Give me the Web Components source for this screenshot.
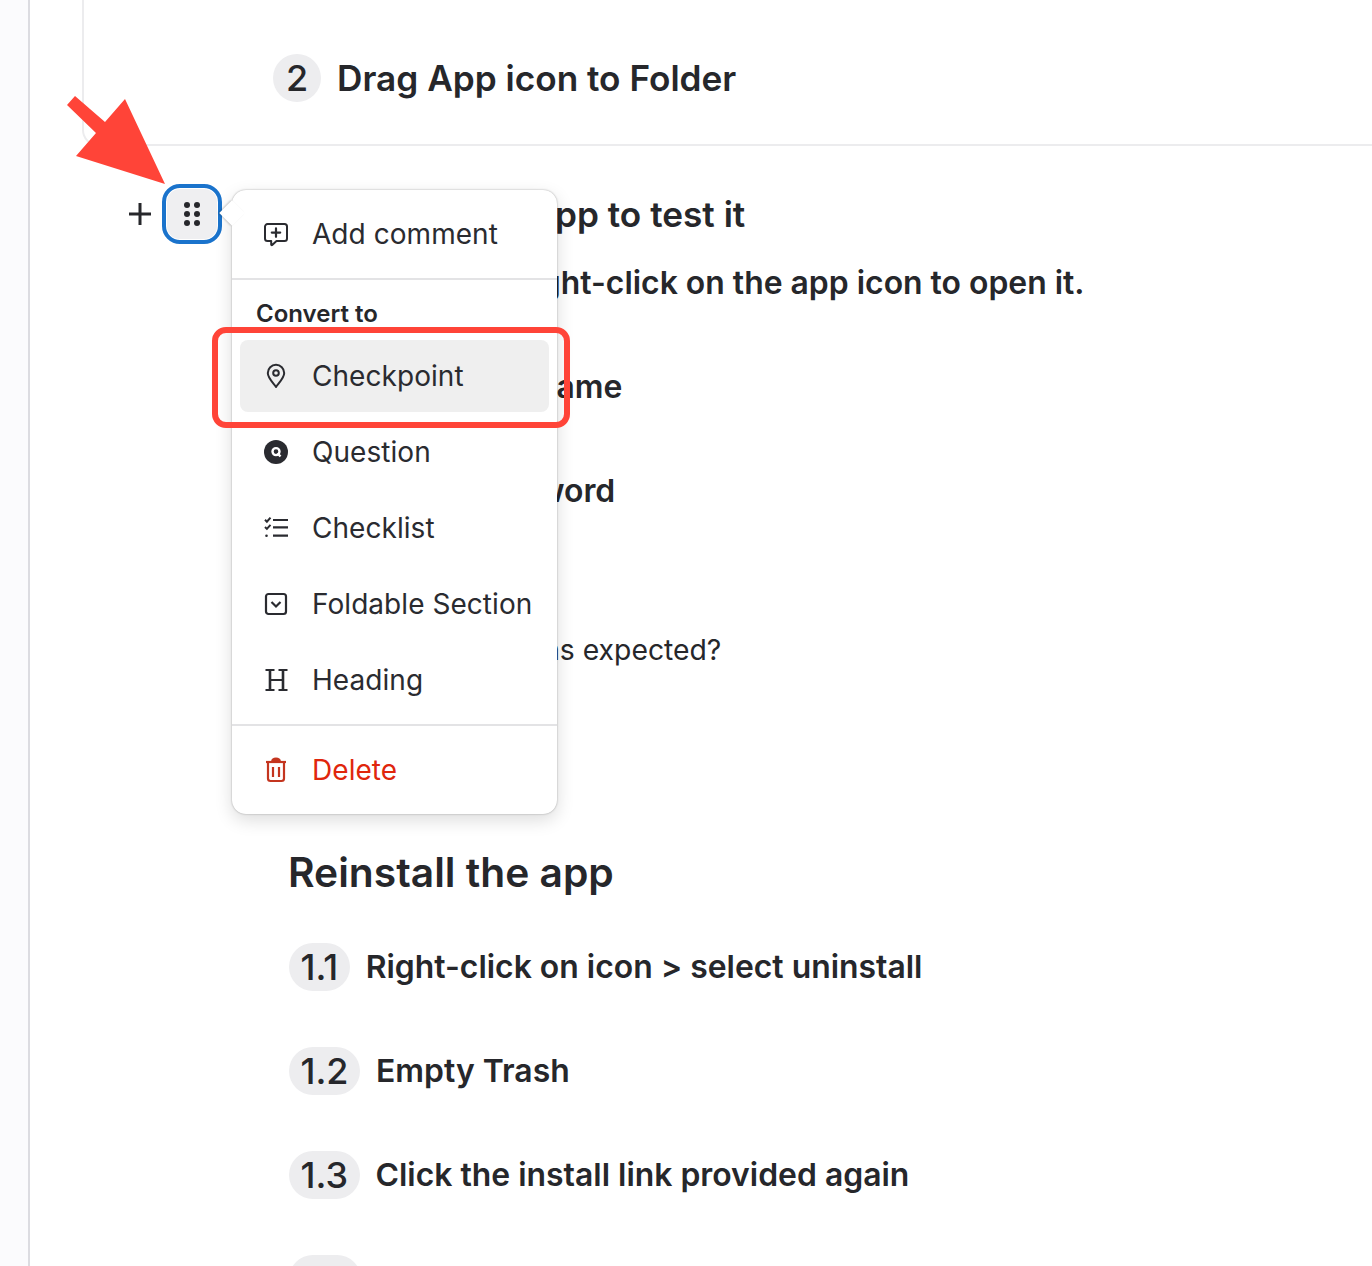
<!DOCTYPE html>
<html><head><meta charset="utf-8"><title>Guide editor</title>
<style>
html,body{margin:0;height:1266px;overflow:hidden;background:#fff}
body{font-family:Inter,"Noto Sans",sans-serif;color:#26272b}
</style></head><body>
<app-shell>
  <step-head num="2">Drag App icon to Folder</step-head>
  <guide-text slot="body" kind="head" num="3" style="margin-top:44px">Launch the app to test it</guide-text>
  <guide-text slot="body" kind="strong" style="margin-top:24px;margin-left:5px">Hold control + right-click on the app icon to open it.</guide-text>
  <guide-text slot="body" kind="strong" style="margin-top:64px;margin-left:12px">Enter your username</guide-text>
  <guide-text slot="body" kind="strong" style="margin-top:64px;margin-left:8px">Enter your password</guide-text>
  <guide-text slot="body" kind="plain" style="margin-top:120px;margin-left:18px">Did the app open as expected?</guide-text>
  <guide-text slot="body" kind="title" style="margin-top:177px;margin-left:-1px">Reinstall the app</guide-text>
  <sub-step slot="body" num="1.1" style="margin-top:46px">Right-click on icon &gt; select uninstall</sub-step>
  <sub-step slot="body" num="1.2" style="margin-top:56px">Empty Trash</sub-step>
  <sub-step slot="body" num="1.3" style="margin-top:56px">Click the install link provided again</sub-step>
  <sub-step slot="body" num="1.4" style="margin-top:56px">Reopen the app</sub-step>
</app-shell>
<script>
const def=(name,html,init)=>customElements.define(name,class extends HTMLElement{
  constructor(){super();const r=this.attachShadow({mode:'open'});r.innerHTML=html;}
  connectedCallback(){init&&init(this,this.shadowRoot);}
});
const ICONS={
 comment:'<g transform="translate(0 .6)"><path d="M3.500 1.500h17a2.500 2.500 0 0 1 2.500 2.500v12a2.500 2.500 0 0 1-2.500 2.500h-8l-4.300 3.900a.6.6 0 0 1-1-.4v-3.500H3.500a2.500 2.500 0 0 1-2.500-2.500V4a2.500 2.500 0 0 1 2.500-2.500z" fill="none" stroke="currentColor" stroke-width="2" stroke-linejoin="round"/><path d="M12 5.800v8.400M7.800 10h8.400" stroke="currentColor" stroke-width="2.200" stroke-linecap="round"/></g>',
 pin:'<path d="M12 23C10.200 20 3.800 14.200 3.800 9a8.200 8.200 0 0 1 16.400 0C20.200 14.200 13.800 20 12 23z" fill="none" stroke="currentColor" stroke-width="2" stroke-linejoin="round"/><circle cx="12" cy="9" r="2.800" fill="none" stroke="currentColor" stroke-width="2"/>',
 question:'<circle cx="12" cy="12" r="12" fill="currentColor"/><circle cx="12" cy="11.600" r="3.500" fill="none" stroke="#fff" stroke-width="2.400"/><path d="M13.500 13.200l3 3.300" stroke="#fff" stroke-width="2.400"/>',
 check:'<path d="M1 3.800l1.900 1.900L6.500 1.700M1 11l1.900 1.900L6.500 8.900" fill="none" stroke="currentColor" stroke-width="2"/><circle cx="2.500" cy="19.700" r="1.300" fill="currentColor"/><path d="M9 4h15M9 11.300h15M9 19.700h15" stroke="currentColor" stroke-width="2.200"/>',
 fold:'<rect x="2" y="2" width="20" height="20" rx="2.500" fill="none" stroke="currentColor" stroke-width="2.200"/><path d="M7.500 10l4.500 4.500 4.500-4.500" fill="none" stroke="currentColor" stroke-width="2.200"/>',
 heading:'<path d="M6 2v20M19 2v20" fill="none" stroke="currentColor" stroke-width="2.600"/><path d="M6 12h13M1.500 2h9M14.500 2h9M1.500 22h9M14.500 22h9" fill="none" stroke="currentColor" stroke-width="1.800"/>',
 trash:'<path d="M2 4h20" stroke="currentColor" stroke-width="2.200"/><path d="M7 3.500C7.500 .5 9 -.5 12 -.5s4.500 1 5 4z" fill="currentColor"/><path d="M4 5v15.500a2.500 2.500 0 0 0 2.500 2.500h11a2.500 2.500 0 0 0 2.500-2.500V5" fill="none" stroke="currentColor" stroke-width="2.200"/><path d="M9 9v10M15 9v10" stroke="currentColor" stroke-width="2.200"/>'
};
def('step-badge',`<style>:host{display:inline-flex;align-items:center;justify-content:center;flex:none;height:48px;min-width:48px;box-sizing:border-box;padding:0 11.500px;border-radius:24px;background:#ededef;font-size:36px;font-weight:500;line-height:48px;color:#26272b}</style><slot></slot>`);
def('step-head',`<style>:host{display:flex;align-items:center;gap:16px;height:48px;font-size:35.200px;font-weight:600;line-height:48px;white-space:nowrap}</style><step-badge></step-badge><span><slot></slot></span>`,
 (h,r)=>{r.querySelector('step-badge').textContent=h.getAttribute('num');});
def('sub-step',`<style>:host{display:flex;align-items:center;gap:16px;height:48px;font-size:31.900px;font-weight:600;line-height:48px;white-space:nowrap;color:#26272b}</style><step-badge></step-badge><span><slot></slot></span>`,
 (h,r)=>{r.querySelector('step-badge').textContent=h.getAttribute('num');});
def('guide-text',`<style>:host{display:flex;align-items:center;gap:16px;white-space:nowrap}
:host([kind=head]){margin-left:-16px;height:48px;font-size:35.200px;font-weight:600}
:host([kind=strong]){height:40px;font-size:31.900px;font-weight:600}
:host([kind=plain]){height:40px;font-size:28.300px;font-weight:400}
:host([kind=title]){height:50px;font-size:40.750px;font-weight:600}
</style><step-badge hidden></step-badge><span><slot></slot></span>`,(h,r)=>{
 const b=r.querySelector('step-badge');if(h.getAttribute('num')){b.hidden=false;b.textContent=h.getAttribute('num');}else b.remove();});
def('menu-item',`<style>:host{display:flex;align-items:center;gap:24px;height:72px;box-sizing:border-box;margin:0 8px;padding-left:24px;border-radius:8px;font-size:28px;letter-spacing:.05px;color:#2a2b30;white-space:nowrap}
:host([active]){background:#efefef}:host([danger]){color:#e0260c}
svg{width:24px;height:24px;flex:none;overflow:visible}:host([danger]) svg{color:#c4351f}</style><svg viewBox="0 0 24 24"></svg><span><slot></slot></span>`,
 (h,r)=>{r.querySelector('svg').innerHTML=ICONS[h.getAttribute('icon')];});
def('block-menu',`<style>:host{display:block;position:absolute;left:232px;top:190px;width:325px;height:624px;box-sizing:border-box;background:#fff;border-radius:14px;box-shadow:0 0 2px rgba(0,0,0,.35),0 6px 18px rgba(0,0,0,.14);padding:8px 0;color:#2a2b30}
.caret{position:absolute;left:-9px;top:14px;width:18px;height:18px;background:#fff;transform:rotate(45deg);box-shadow:-1px 1px 2px rgba(0,0,0,.2);z-index:0}
.in{position:relative;z-index:1;display:flex;flex-direction:column}
hr{border:0;height:2px;background:#e3e3e5;margin:8px 0}
.label{font-size:24px;font-weight:600;line-height:34px;padding:17px 0 0 24px;color:#26272b;height:34px;margin-bottom:9px}
.list{display:flex;flex-direction:column;gap:4px}</style>
<div class="caret"></div><div class="in"><slot name="top"></slot><hr style="margin-bottom:0"><div class="label">Convert to</div><div class="list"><slot name="list"></slot></div><hr><slot name="end"></slot></div>`);
def('block-handle',`<style>:host{display:block;position:absolute;left:126px;top:184px;width:96px;height:60px}
.plus{position:absolute;left:3px;top:19px;width:22px;height:22px}
.box{position:absolute;left:36px;top:0;width:60px;height:60px;box-sizing:border-box;border:4px solid #1a73cc;border-radius:18px;background:#efeff1;box-shadow:inset 0 0 0 1px #fff}
.dots{position:absolute;left:56px;top:17px;width:20px;height:26px}</style>
<svg class="plus" viewBox="0 0 22 22"><path d="M11 0v22M0 11h22" stroke="#26272b" stroke-width="3"/></svg><div class="box"></div>
<svg class="dots" viewBox="0 0 20 26"><g fill="#26272b"><circle cx="5" cy="4" r="3"/><circle cx="15" cy="4" r="3"/><circle cx="5" cy="13" r="3"/><circle cx="15" cy="13" r="3"/><circle cx="5" cy="22" r="3"/><circle cx="15" cy="22" r="3"/></g></svg>`);
def('callout-marks',`<style>:host{display:block;position:absolute;left:0;top:0;pointer-events:none}
svg{position:absolute;left:60px;top:90px;width:110px;height:100px}
.rect{position:absolute;left:212px;top:327px;width:358px;height:101px;box-sizing:border-box;border:6px solid #ff4438;border-radius:14px}</style>
<svg viewBox="60 90 110 100"><polygon fill="#ff4438" points="67,105 75,96 105,122 125,99 165,184 76,156 96,133"/></svg><div class="rect"></div>`);
def('app-shell',`<style>:host{display:grid;grid-template-columns:30px 1fr;height:1266px;position:relative;overflow:hidden}
.side{background:#fbfbfd;border-right:2px solid #dcdce1;box-sizing:border-box}
.main{display:flex;flex-direction:column;min-width:0}
.tree{margin-left:52px;height:146px;box-sizing:border-box;border-left:2px solid #ececee;border-bottom:2px solid #ececee;border-bottom-left-radius:16px;padding:54px 0 0 189px}
.body{margin-left:259px;display:flex;flex-direction:column}</style>
<div class="side"></div><div class="main"><div class="tree"><slot></slot></div><div class="body"><slot name="body"></slot></div></div>
<block-handle></block-handle>
<block-menu>
 <menu-item slot="top" icon="comment">Add comment</menu-item>
 <menu-item slot="list" icon="pin" active>Checkpoint</menu-item>
 <menu-item slot="list" icon="question">Question</menu-item>
 <menu-item slot="list" icon="check">Checklist</menu-item>
 <menu-item slot="list" icon="fold">Foldable Section</menu-item>
 <menu-item slot="list" icon="heading">Heading</menu-item>
 <menu-item slot="end" icon="trash" danger>Delete</menu-item>
</block-menu>
<callout-marks></callout-marks>`);
</script>
</body></html>
